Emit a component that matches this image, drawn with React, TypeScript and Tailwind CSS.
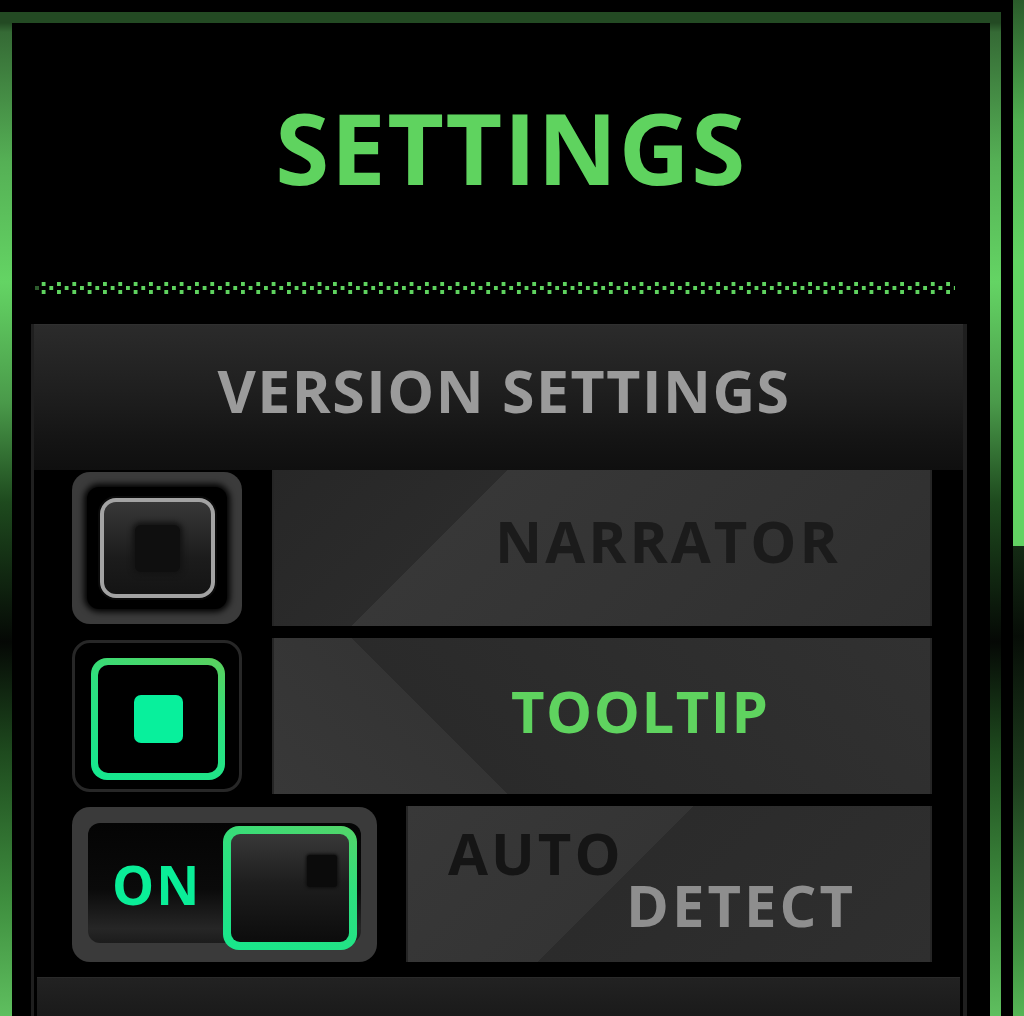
function DottedRule() {
  return (
    <svg className="mt-[86px] ml-[23px] block shrink-0" width={920} height={12} shapeRendering="crispEdges">
      <defs>
        <pattern id="dots" patternUnits="userSpaceOnUse" x={6.7} y={0} width={15.33} height={12}>
          <rect x={0} y={0} width={3.5} height={3.5} fill="#5fd35f" />
          <rect x={0} y={8} width={3.5} height={3.5} fill="#5fd35f" />
          <rect x={7.67} y={4} width={3.5} height={3.5} fill="#5fd35f" />
        </pattern>
      </defs>
      <rect x={0} y={4} width={3.5} height={3.5} fill="#2c5a2c" />
      <rect x={6} y={0} width={914} height={12} fill="url(#dots)" />
    </svg>
  );
}

function CheckboxOff() {
  return (
    <div className="w-[170px] h-[152px] shrink-0 rounded-[18px] bg-[#3b3b3b] p-[15px]">
      <div className="h-full rounded-[12px] bg-black shadow-[0_0_6px_3px_#000] flex items-center justify-center">
        <div className="w-[115px] h-[100px] rounded-[16px] border-[4px] border-[#a3a3a3] bg-[linear-gradient(180deg,#383838,#1c1c1c_60%,#141414)] shadow-[0_0_0_2px_#0b0b0b] flex items-center justify-center">
          <div className="w-[45px] h-[47px] rounded-[6px] bg-[#0f0f0f] shadow-[0_0_5px_3px_#141414]" />
        </div>
      </div>
    </div>
  );
}

function CheckboxOn() {
  return (
    <div className="w-[170px] h-[152px] shrink-0 rounded-[18px] border-[3px] border-[#272727] bg-black flex items-center justify-center">
      <div className="mt-[6px] ml-[2px] w-[134px] h-[122px] rounded-[16px] p-[7px] bg-[linear-gradient(200deg,#5ccf5c,#2ee07e_40%,#14e890)]">
        <div className="h-full rounded-[10px] bg-black flex items-center justify-center">
          <div className="w-[49px] h-[48px] rounded-[7px] bg-[#08f09c]" />
        </div>
      </div>
    </div>
  );
}

function Toggle() {
  return (
    <div className="w-[305px] h-[155px] shrink-0 rounded-[18px] bg-[#3a3a3a] px-[16px] pt-[16px] pb-[19px]">
      <div className="h-full rounded-[12px] bg-[linear-gradient(180deg,#040404_0%,#0a0a0a_55%,#262626_88%,#1c1c1c_100%)] flex items-start">
        <span className="ml-[24px] mt-[35px] text-[53px] leading-none font-bold tracking-[2px] text-[#0aee98]">
          ON
        </span>
        <div className="ml-auto mr-[4px] mt-[3px] w-[134px] h-[124px] shrink-0 rounded-[16px] p-[8px] bg-[linear-gradient(200deg,#55d468,#2ee07e_40%,#18e68c)]">
          <div className="h-full rounded-[9px] bg-[linear-gradient(180deg,#383838,#1e1e1e_45%,#0c0c0c)] flex justify-end items-start pt-[21px] pr-[12px]">
            <div className="w-[30px] h-[32px] rounded-[3px] bg-[#0b0b0b] shadow-[0_0_3px_1px_#0e0e0e]" />
          </div>
        </div>
      </div>
    </div>
  );
}

export default function App() {
  return (
    <div className="h-[1016px] w-[1024px] overflow-hidden bg-black flex font-['Open_Sans','Noto_Sans',sans-serif]">
      {/* main frame */}
      <div className="w-[1001px] shrink-0 pt-[12px] flex flex-col">
        <div className="flex-1 pt-[11px] pl-[12px] pr-[11px] flex flex-col bg-[linear-gradient(180deg,#234a23_0px,#234a23_11px,#356a35_20px,#55b055_150px,#64d464_270px,#4a9a4a_390px,#1e4a1e_490px,#050805_630px,#1e4a1e_740px,#3f8f3f_890px,#5fbf5f_1004px)]">
          <div className="flex-1 bg-black flex flex-col">
            <h1 className="mt-[75px] pl-[20px] text-center text-[98px] leading-none font-bold tracking-[1.5px] text-[#5fd35f]">
              SETTINGS
            </h1>

            <DottedRule />

            <div className="mt-[30px] ml-[19px] w-[936px] flex-1 flex flex-col border-l-[3px] border-r-[4px] border-[#1f1f1f]">
              <div className="h-[146px] shrink-0 border-t border-[#303030] bg-[linear-gradient(180deg,#2b2b2b_0%,#1f1f1f_45%,#141414_80%,#0f0f0f_100%)] pt-[36px] pl-[11px] text-center">
                <span className="text-[59px] leading-none font-bold tracking-[1.5px] text-[#9b9b9b]">
                  VERSION SETTINGS
                </span>
              </div>

              <div className="flex flex-col gap-[12px] pl-[38px] pr-[31px]">
                <div className="h-[156px] flex items-center gap-[30px]">
                  <CheckboxOff />
                  <div className="h-full flex-1 border-x-2 border-[#252525] bg-[linear-gradient(135deg,#272727_0px,#2b2b2b_165px,#373737_165px,#2f2f2f_100%)] pl-[221px] pt-[42px]">
                    <div className="text-[58px] leading-none font-bold tracking-[3px] text-[#1b1b1b]">NARRATOR</div>
                  </div>
                </div>

                <div className="h-[156px] flex items-center gap-[30px]">
                  <CheckboxOn />
                  <div className="h-full flex-1 border-x-2 border-[#252525] bg-[linear-gradient(45deg,#383838_0px,#343434_165px,#2a2a2a_165px,#313131_100%)] pl-[237px] pt-[44px]">
                    <div className="text-[58px] leading-none font-bold tracking-[1.5px] text-[#5fd35f]">TOOLTIP</div>
                  </div>
                </div>

                <div className="h-[156px] flex items-center gap-[29px]">
                  <Toggle />
                  <div className="h-full flex-1 border-x-2 border-[#252525] bg-[linear-gradient(135deg,#383838_0px,#343434_202px,#2b2b2b_202px,#2f2f2f_100%)] pt-[18px]">
                    <div className="pl-[40px] text-[58px] leading-none font-bold tracking-[3px] text-[#151515]">AUTO</div>
                    <div className="-mt-[6px] pl-[218px] text-[58px] leading-none font-bold tracking-[3px] text-[#8e8e8e]">DETECT</div>
                  </div>
                </div>
              </div>

              <div className="mt-[15px] mx-[3px] flex-1 border-t border-[#2a2a2a] bg-[linear-gradient(180deg,#222222,#1a1a1a)]" />
            </div>
          </div>
        </div>
      </div>

      {/* right edge stripe */}
      <div className="ml-[12px] w-[11px] shrink-0 flex flex-col">
        <div className="h-[546px] bg-[linear-gradient(180deg,#2a5a2a_0px,#4fae4f_120px,#62d462_260px,#62d262_546px)]" />
        <div className="flex-1 bg-[linear-gradient(180deg,#142a14_0px,#070d07_90px,#1e3f1e_240px,#3f8f3f_400px,#55b555_470px)]" />
      </div>
    </div>
  );
}
